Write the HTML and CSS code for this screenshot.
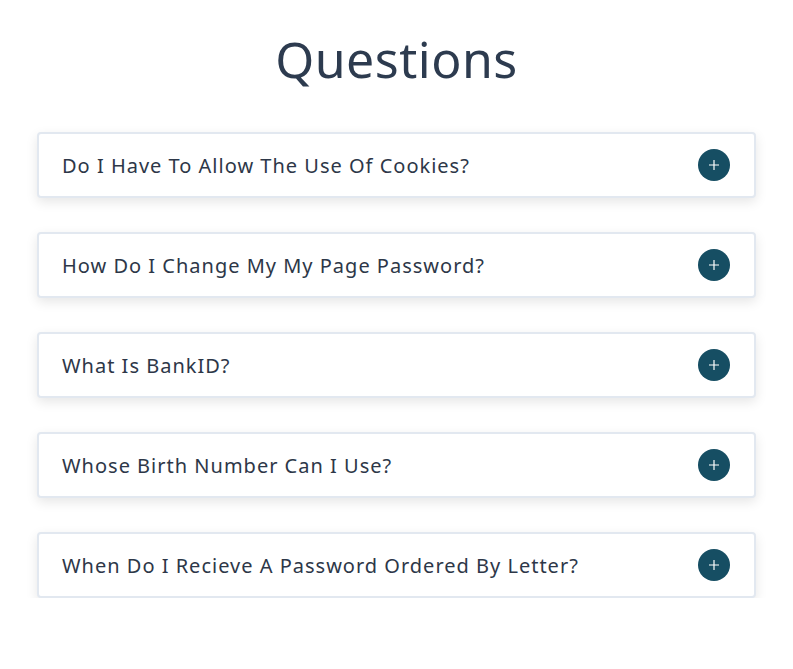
FILE: index.html
```html
<!DOCTYPE html>
<html lang="en">
<head>
<meta charset="utf-8">
<title>Questions</title>
<link rel="stylesheet" href="styles.css">
</head>
<body>
<main class="faq">
  <h1 class="faq-title">Questions</h1>
  <div class="faq-list">
    <div class="faq-item"><span class="faq-q">Do I Have To Allow The Use Of Cookies?</span><span class="faq-btn"><svg viewBox="0 0 12 12" width="12" height="12"><path d="M6 1v10M1 6h10" stroke="#fff" stroke-width="1.2"/></svg></span></div>
    <div class="faq-item"><span class="faq-q">How Do I Change My My Page Password?</span><span class="faq-btn"><svg viewBox="0 0 12 12" width="12" height="12"><path d="M6 1v10M1 6h10" stroke="#fff" stroke-width="1.2"/></svg></span></div>
    <div class="faq-item"><span class="faq-q">What Is BankID?</span><span class="faq-btn"><svg viewBox="0 0 12 12" width="12" height="12"><path d="M6 1v10M1 6h10" stroke="#fff" stroke-width="1.2"/></svg></span></div>
    <div class="faq-item"><span class="faq-q">Whose Birth Number Can I Use?</span><span class="faq-btn"><svg viewBox="0 0 12 12" width="12" height="12"><path d="M6 1v10M1 6h10" stroke="#fff" stroke-width="1.2"/></svg></span></div>
    <div class="faq-item"><span class="faq-q">When Do I Recieve A Password Ordered By Letter?</span><span class="faq-btn"><svg viewBox="0 0 12 12" width="12" height="12"><path d="M6 1v10M1 6h10" stroke="#fff" stroke-width="1.2"/></svg></span></div>
  </div>
</main>
</body>
</html>
```

FILE: styles.css
```css
* { box-sizing: border-box; }
html, body { margin: 0; padding: 0; background: #fff; }
body { font-family: "Noto Sans", "Open Sans", sans-serif; color: #2d3748; }
.faq { width: 719px; margin: 0 auto; padding-top: 26px; }
.faq-title {
  margin: 0 0 40px;
  text-align: center;
  font-weight: 400;
  font-size: 50px;
  letter-spacing: 0.5px;
  line-height: 66px;
  color: #2d3b4f;
}
.faq-list { display: flex; flex-direction: column; gap: 34px; }
.faq-item {
  height: 66px;
  border: 2px solid #e2e8f0;
  border-radius: 4px;
  box-shadow: 0 4px 12px rgba(0,0,0,0.1);
  display: flex;
  align-items: center;
  justify-content: space-between;
  padding: 0 24px 0 23px;
  background: #fff;
}
.faq-q {
  font-size: 20px;
  letter-spacing: 1px;
  color: #2d3748;
}
.faq-btn {
  width: 32px; height: 32px;
  border-radius: 50%;
  background: #164e63;
  display: flex; align-items: center; justify-content: center;
}
.faq-btn svg { display: block; }
```
